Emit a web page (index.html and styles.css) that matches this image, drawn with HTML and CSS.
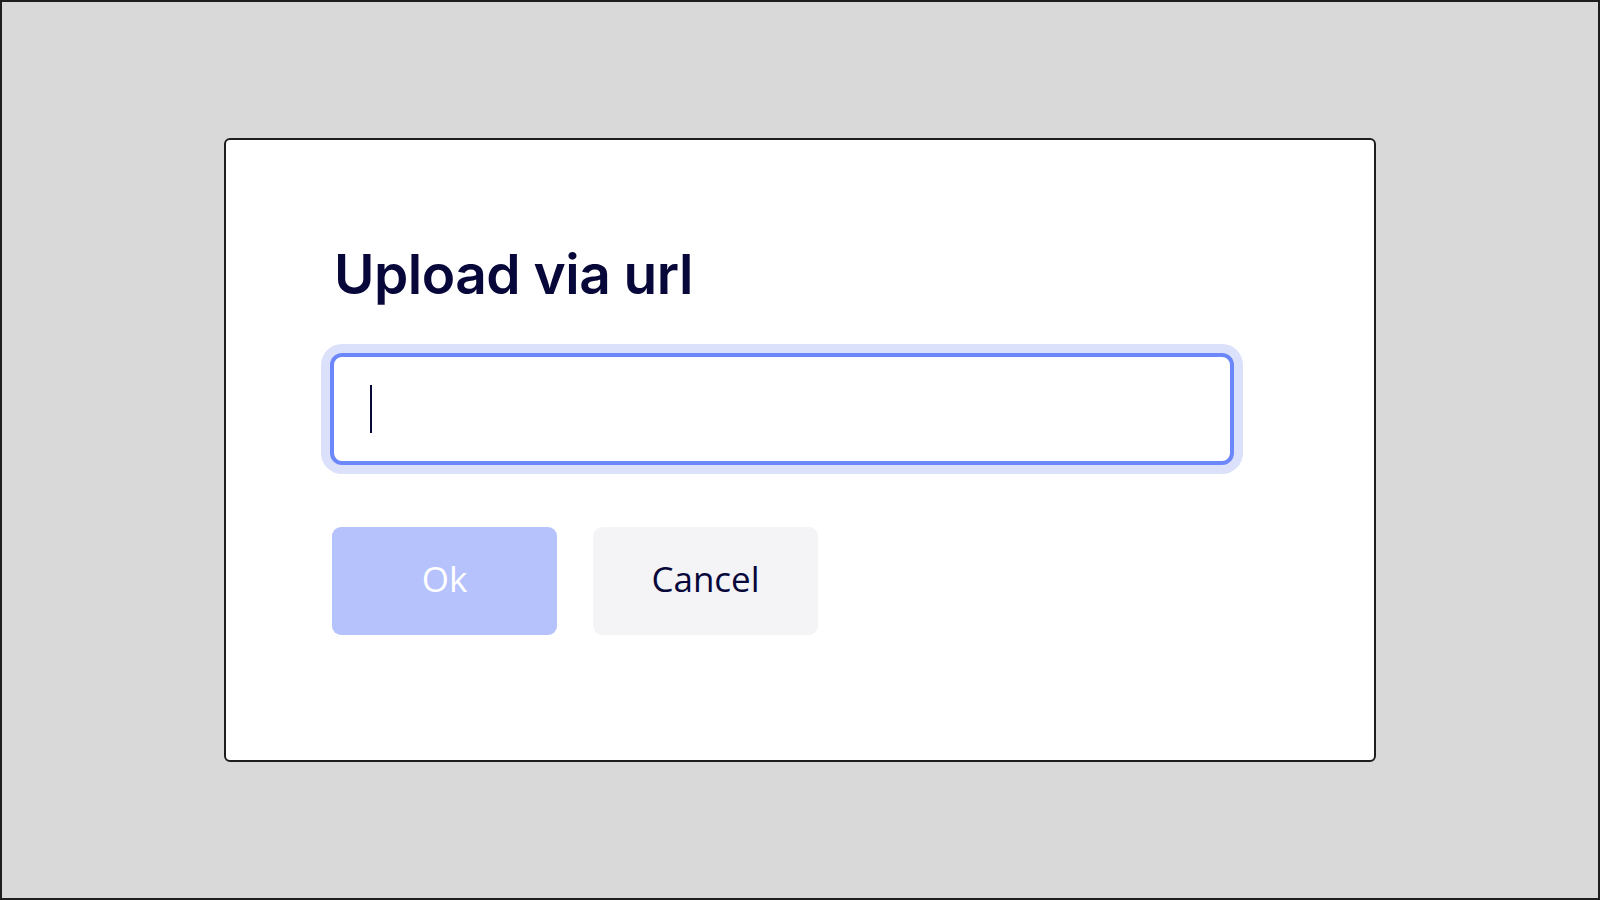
FILE: index.html
```html
<!DOCTYPE html>
<html lang="en">
<head>
<meta charset="utf-8">
<title>Upload via url</title>
<link rel="stylesheet" href="styles.css">
</head>
<body>
<div class="screen">
  <div class="dialog">
    <h1 class="title">Upload via url</h1>
    <div class="field"><span class="caret"></span></div>
    <div class="actions">
      <button class="btn btn-ok" type="button">Ok</button>
      <button class="btn btn-cancel" type="button">Cancel</button>
    </div>
  </div>
</div>
</body>
</html>
```

FILE: styles.css
```css
* { box-sizing: border-box; }
html, body { margin: 0; padding: 0; }
body { width: 1600px; height: 900px; overflow: hidden; }

.screen {
  width: 1600px;
  height: 900px;
  background: #d9d9d9;
  border: 2px solid #1e1e1e;
  display: flex;
  align-items: center;
  justify-content: center;
}

.dialog {
  width: 1152px;
  height: 624px;
  background: #ffffff;
  border: 2px solid #1e1e1e;
  border-radius: 6px;
  padding: 101px 140px 0 104px;
  display: flex;
  flex-direction: column;
}

.title {
  margin: 0;
  font-family: Inter, "Noto Sans", sans-serif;
  font-weight: 600;
  font-size: 55px;
  line-height: 67px;
  color: #07073a;
  letter-spacing: -0.5px;
  padding-left: 4px;
}

.field {
  margin-top: 45px;
  width: 904px;
  height: 112px;
  border: 4px solid #6c87f9;
  border-radius: 12px;
  box-shadow: 0 0 0 9px #dbe0fb;
  background: #fff;
  display: flex;
  align-items: center;
  padding-left: 36px;
}

.caret {
  width: 2px;
  height: 48px;
  background: #07073a;
}

.actions {
  margin-top: 62px;
  margin-left: 2px;
  display: flex;
  gap: 36px;
}

.btn {
  width: 225px;
  height: 108px;
  border: none;
  border-radius: 9px;
  font-family: "Open Sans", "Noto Sans", sans-serif;
  font-size: 35px;
  font-weight: 400;
  padding: 0 0 6px 0;
  margin: 0;
}

.btn-ok {
  background: #b5c2fb;
  color: #ffffff;
}

.btn-cancel {
  background: #f4f4f7;
  color: #07073a;
}
```
